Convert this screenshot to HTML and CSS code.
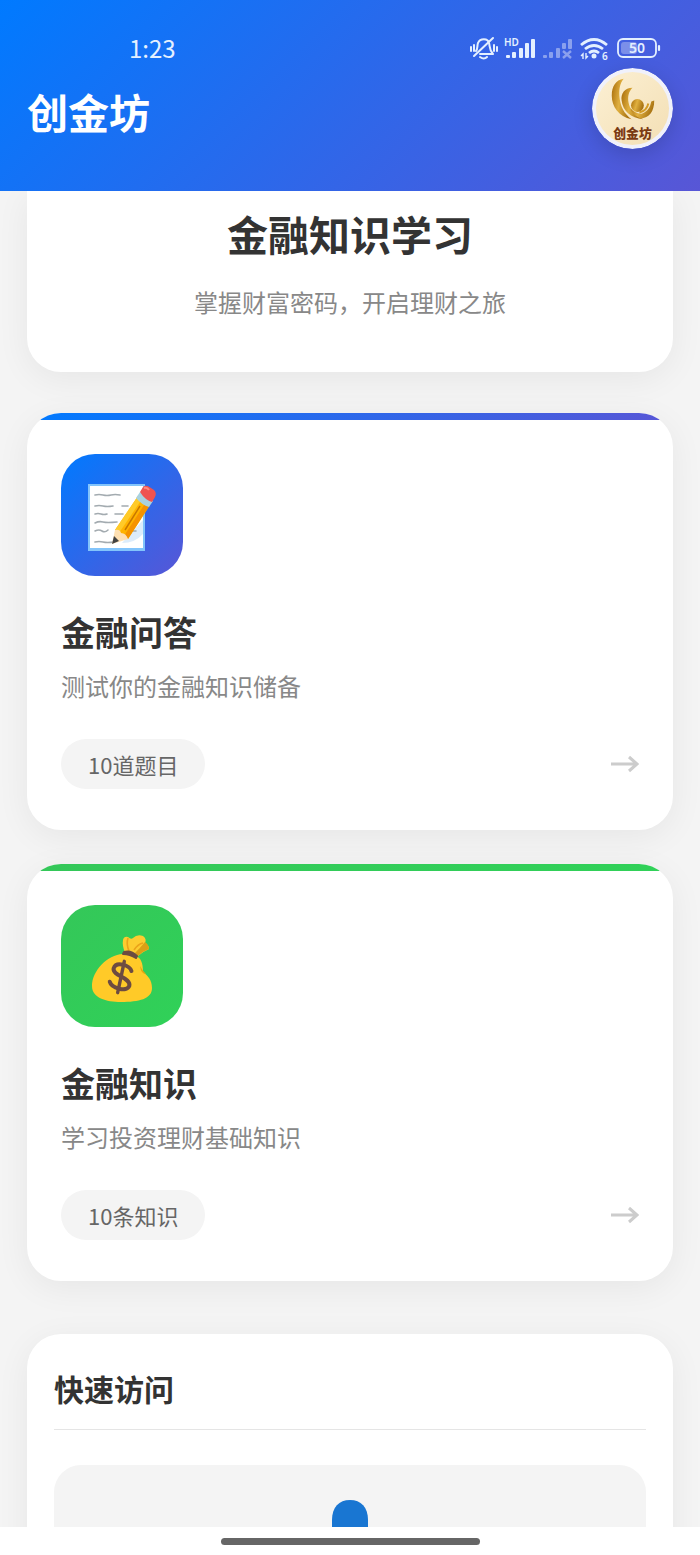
FILE: index.html
```html
<!DOCTYPE html>
<html lang="zh-CN">
<head>
    <meta charset="UTF-8">
    <meta name="viewport" content="width=device-width, initial-scale=1.0">
    <title>创金坊</title>
    <link rel="stylesheet" href="styles.css">
</head>
<body>
    <header class="header">
        <div class="status-bar">
            <span class="time">1:23</span>
            <svg class="status-icons" width="194" height="28" viewBox="0 0 194 28">
                <!-- 静音 -->
                <g fill="none" stroke="#e4f0ff" stroke-width="2" stroke-linecap="round" stroke-linejoin="round">
                    <path d="M8 17 C10 15 9 11 10 9 C12 4 20 4 21 9 C22 12 21 16 25 20 H12"/>
                    <path d="M12 23 Q16 26 19 23"/>
                    <path d="M25 4 L6 22"/>
                    <path d="M3 13 V17 M6 11 V17 M26 11 V17 M29 13 V17"/>
                </g>
                <!-- 信号 -->
                <text class="hd" x="36" y="12">HD</text>
                <g fill="#e4f0ff">
                    <rect x="38" y="21" width="4" height="3" rx="1"/>
                    <rect x="44" y="18" width="4" height="6" rx="1"/>
                    <rect x="51" y="14" width="4" height="10" rx="1"/>
                    <rect x="57" y="9" width="4" height="15" rx="1"/>
                    <rect x="63" y="5" width="4" height="19" rx="1"/>
                </g>
                <g fill="#fff" opacity="0.4">
                    <rect x="75" y="21" width="4" height="3" rx="1"/>
                    <rect x="81" y="18" width="4" height="6" rx="1"/>
                    <rect x="88" y="14" width="4" height="10" rx="1"/>
                    <rect x="94" y="9" width="4" height="6" rx="1"/>
                    <rect x="100" y="5" width="4" height="10" rx="1"/>
                    <path d="M95 17 L103 24 M103 17 L95 24" stroke="#fff" stroke-width="2.4"/>
                </g>
                <!-- WiFi -->
                <g fill="none" stroke="#e4f0ff" stroke-width="2.8">
                    <path d="M113 11 Q126 0 139 11"/>
                    <path d="M117 15 Q126 8 135 15"/>
                    <path d="M121 19 Q126 15 131 19"/>
                    <path d="M115 25 V20 L113 22 M118 19 V24 L120 22" stroke-width="1.4"/>
                </g>
                <circle cx="126" cy="22" r="2.5" fill="#e4f0ff"/>
                <text class="hd" x="134" y="26">6</text>
                <!-- 电量 -->
                <rect x="150" y="5" width="38" height="18" rx="5" fill="none" stroke="#e4f0ff" stroke-width="1.8"/>
                <rect x="153" y="8" width="16" height="12" rx="3" fill="#fff" opacity="0.3"/>
                <path d="M191 12 V16" stroke="#e4f0ff" stroke-width="2.2" stroke-linecap="round"/>
                <text class="battery" x="169" y="19">50</text>
            </svg>
        </div>
        <div class="brand">
            <h1 class="brand-name">创金坊</h1>
            <svg class="brand-logo" viewBox="0 0 82 82">
                <defs>
                    <linearGradient id="gold" x1="0" y1="0" x2="1" y2="0.3">
                        <stop offset="0" stop-color="#a66a08"/>
                        <stop offset="0.5" stop-color="#e0b040"/>
                        <stop offset="1" stop-color="#a87312"/>
                    </linearGradient>
                    <linearGradient id="cream" x1="0" y1="0" x2="1" y2="1">
                        <stop offset="0" stop-color="#fcf0d4"/>
                        <stop offset="1" stop-color="#f3dfb4"/>
                    </linearGradient>
                </defs>
                <circle cx="41" cy="41" r="41" fill="#f0f1fb"/>
                <circle cx="41" cy="41" r="37" fill="url(#cream)"/>
                <g fill="url(#gold)">
                    <path d="M32 11 C24 12 20 19 20 28 C20 39 27 49 40 52 C32 46 29 39 28 31 C27 23 28 16 32 11 Z"/>
                    <path d="M41 20 C33 20 29 26 30 33 C31 43 39 51 52 52 C44 48 38 42 37 35 C36 29 37 24 41 20 Z"/>
                    <path d="M63 33 C63 44 58 51 49 51 C44 49 40 45 39 41 C43 45 47 47 51 46 C57 44 59 39 60 34 Z"/>
                    <circle cx="46" cy="38" r="6.5"/>
                </g>
                <path d="M57 36 C56 41 53 44 48 45" fill="none" stroke="#d39b25" stroke-width="2"/>
                <text class="logo-text" x="41" y="71">创金坊</text>
            </svg>
        </div>
    </header>

    <main class="content">
        <section class="intro">
            <h2 class="intro-title">金融知识学习</h2>
            <p class="intro-text">掌握财富密码，开启理财之旅</p>
        </section>

        <div class="cards">
            <a class="card card-quiz" href="#quiz">
                <span class="card-icon">
                    <svg viewBox="0 0 122 122">
                        <rect x="28" y="31" width="55" height="65" fill="#fff" stroke="#82c4fb" stroke-width="2"/>
                        <path d="M29 95 H82" stroke="#82c4fb" stroke-width="2"/>
                        <path d="M82 66 V80 Q74 89 61 89 Z" fill="#dcecfb"/>
                        <g fill="none" stroke="#a3abb0" stroke-width="1.6" stroke-linecap="round">
                            <path d="M34 41 Q38 40 42 41 T50 41 T59 41"/>
                            <path d="M34 52 Q38 51 42 52 T52 52 M61 52 H67"/>
                            <path d="M34 60 Q37 59 40 60 T46 60 M54 60 H62"/>
                            <path d="M34 69 Q38 67 42 68 T56 68"/>
                            <path d="M34 77 Q38 75 41 77 T47 76 M71 77 H75"/>
                            <path d="M34 88 Q38 87 42 88 T53 88"/>
                        </g>
                        <path d="M77 42 L89 51 L67 85 L54 76 Z" fill="#ffb300"/>
                        <path d="M77 42 L81 45 L58 79 L54 76 Z" fill="#ffca28"/>
                        <path d="M85 48 L89 51 L67 85 L63 82 Z" fill="#f59300"/>
                        <path d="M79 52 L64 76" stroke="#c77700" stroke-width="1.5"/>
                        <path d="M54 76 Q59 75 60 79 Q65 79 67 85 L51 90 Z" fill="#ffe0b2"/>
                        <path d="M53 82 L58 87 L51 90 Z" fill="#424242"/>
                        <path d="M79 38 L92 47 L88 53 Q81 51 75 44 Z" fill="#a9d2df"/>
                        <path d="M79 38 L82 33 Q85 30 90 34 L93 36 Q96 39 94 43 L91 48 Q84 46 79 38 Z" fill="#ef5350"/>
                        <path d="M83 34 Q86 33 88 36" fill="none" stroke="#ff8a80" stroke-width="2"/>
                    </svg>
                </span>
                <h3 class="card-title">金融问答</h3>
                <p class="card-text">测试你的金融知识储备</p>
                <span class="card-footer">
                    <span class="tag">10道题目</span>
                    <svg class="arrow" viewBox="0 0 28 18"><path d="M0 9 H26 M18 2 L26 9 L18 16"/></svg>
                </span>
            </a>

            <a class="card card-learn" href="#learn">
                <span class="card-icon">
                    <svg viewBox="0 0 122 122">
                        <path d="M64 48 Q61 40 62 35 Q63 31 67 32 Q70 35 72 33 Q76 29 82 31 Q86 34 84 38 Q88 40 88 44 Q83 46 77 51 Z" fill="#fdcc30"/>
                        <path d="M84 37 Q88 40 88 44 Q82 46 77 51 L74 48 Q79 43 84 37 Z" fill="#dba016"/>
                        <path d="M67 33 Q65 39 68 46 M73 45 Q77 39 82 38" fill="none" stroke="#eba31a" stroke-width="1.6"/>
                        <path d="M62 49 C46 50 31 66 31 81 C31 93 45 97 60 97 C78 97 91 94 91 83 C91 75 87 71 82 67 C82 58 80 53 75 51 Z" fill="#ffca28"/>
                        <path d="M79 61 Q80 69 85 69 Q81 65 79 61" fill="#e2a610"/>
                        <path d="M63 47 Q70 45 76 51 L75 53 Q69 49 62 49 Z" fill="#6d4c41" stroke="#6d4c41" stroke-width="2" stroke-linejoin="round"/>
                        <g transform="rotate(12 60 72)" fill="none" stroke="#6d4c41" stroke-linecap="round">
                            <path d="M69 64 C67 59 52 57 51 65 C51 73 70 70 70 79 C69 86 53 85 50 79" stroke-width="4"/>
                            <path d="M60 56 V88" stroke-width="3.4"/>
                        </g>
                    </svg>
                </span>
                <h3 class="card-title">金融知识</h3>
                <p class="card-text">学习投资理财基础知识</p>
                <span class="card-footer">
                    <span class="tag">10条知识</span>
                    <svg class="arrow" viewBox="0 0 28 18"><path d="M0 9 H26 M18 2 L26 9 L18 16"/></svg>
                </span>
            </a>
        </div>

        <section class="quick">
            <h2 class="quick-title">快速访问</h2>
            <a class="quick-item" href="#profile" aria-label="我的">
                <svg width="68" height="80" viewBox="0 0 68 80">
                    <path d="M16 40 V20 C16 7 23 0 34 0 C45 0 52 7 52 20 V40 Z" fill="#1976d2"/>
                    <path d="M0 80 Q0 48 34 48 Q68 48 68 80 Z" fill="#1976d2"/>
                </svg>
            </a>
        </section>
    </main>

    <div class="home-bar"><span class="home-handle"></span></div>
</body>
</html>
```

FILE: styles.css
```css
* {
    box-sizing: border-box;
}

body {
    margin: 0;
    height: 100vh;
    display: flex;
    flex-direction: column;
    overflow: hidden;
    background: #f4f4f4;
    color: #333;
    font-family: "Noto Sans CJK SC", sans-serif;
}

h1, h2, h3, p {
    margin: 0;
}

a {
    color: inherit;
    text-decoration: none;
}

/* 顶部 */
.header {
    flex: none;
    padding: 34px 27px 42px;
    background: linear-gradient(135deg, #007aff, #5856d6);
    color: white;
}

.status-bar {
    display: flex;
    justify-content: space-between;
    align-items: center;
    height: 28px;
    padding: 0 11px 0 102px;
}

.time {
    font-size: 24px;
    line-height: 28px;
    color: #e4f0ff;
}

.status-icons text {
    fill: #e4f0ff;
    font-family: "Noto Sans", sans-serif;
    font-weight: 600;
}

.status-icons .hd {
    font-size: 10px;
}

.status-icons .battery {
    font-size: 14px;
    text-anchor: middle;
}

.brand {
    display: flex;
    justify-content: space-between;
    align-items: center;
    margin-top: 6px;
}

.brand-name {
    padding-top: 4px;
    font-size: 41px;
    line-height: 60px;
    font-weight: 700;
}

.brand-logo {
    width: 81px;
    height: 81px;
    border-radius: 50%;
    box-shadow: 0 6px 20px rgba(0, 0, 0, 0.15);
}

.logo-text {
    fill: #7a3a12;
    font-size: 13px;
    font-weight: 900;
    text-anchor: middle;
}

/* 内容区 */
.content {
    flex: 1;
    min-height: 0;
    padding: 0 27px;
    overflow: hidden;
}

.intro,
.card,
.quick {
    background: white;
    box-shadow: 0 7px 34px rgba(0, 0, 0, 0.06);
}

.intro {
    padding: 12px 34px 54px;
    border-radius: 0 0 34px 34px;
    text-align: center;
}

.intro-title {
    font-size: 41px;
    line-height: 60px;
}

.intro-text {
    margin-top: 23px;
    font-size: 24px;
    line-height: 32px;
    color: #888;
}

.cards {
    display: flex;
    flex-direction: column;
    gap: 34px;
    margin: 41px 0 53px;
}

.card {
    position: relative;
    display: block;
    padding: 41px 34px;
    border-radius: 34px;
    overflow: hidden;
}

.card::before {
    content: "";
    position: absolute;
    top: 0;
    left: 0;
    right: 0;
    height: 7px;
}

.card-quiz::before,
.card-quiz .card-icon {
    background: linear-gradient(135deg, #007aff, #5856d6);
}

.card-learn::before,
.card-learn .card-icon {
    background: linear-gradient(135deg, #34c759, #30d158);
}

.card-icon {
    display: block;
    width: 122px;
    height: 122px;
    border-radius: 34px;
}

.card-icon svg {
    display: block;
}

.card-title {
    margin-top: 36px;
    font-size: 34px;
    line-height: 40px;
}

.card-text {
    margin-top: 18px;
    font-size: 24px;
    line-height: 32px;
    color: #888;
}

.card-footer {
    display: flex;
    justify-content: space-between;
    align-items: center;
    margin-top: 37px;
}

.tag {
    padding: 0 27px;
    border-radius: 25px;
    background: #f4f4f4;
    color: #666;
    font-size: 22px;
    line-height: 50px;
}

.arrow {
    width: 28px;
    height: 18px;
    fill: none;
    stroke: #ccc;
    stroke-width: 3;
}

/* 快速访问 */
.quick {
    padding: 34px 27px;
    border-radius: 34px;
}

.quick-title {
    padding-bottom: 20px;
    border-bottom: 1px solid #e5e5e5;
    font-size: 30px;
    line-height: 41px;
}

.quick-item {
    display: flex;
    justify-content: center;
    margin-top: 35px;
    padding: 35px;
    border-radius: 27px;
    background: #f4f4f4;
}

.home-bar {
    flex: none;
    display: flex;
    justify-content: center;
    align-items: center;
    height: 28px;
    background: white;
}

.home-handle {
    width: 37%;
    height: 7px;
    border-radius: 4px;
    background: #666;
}
```
